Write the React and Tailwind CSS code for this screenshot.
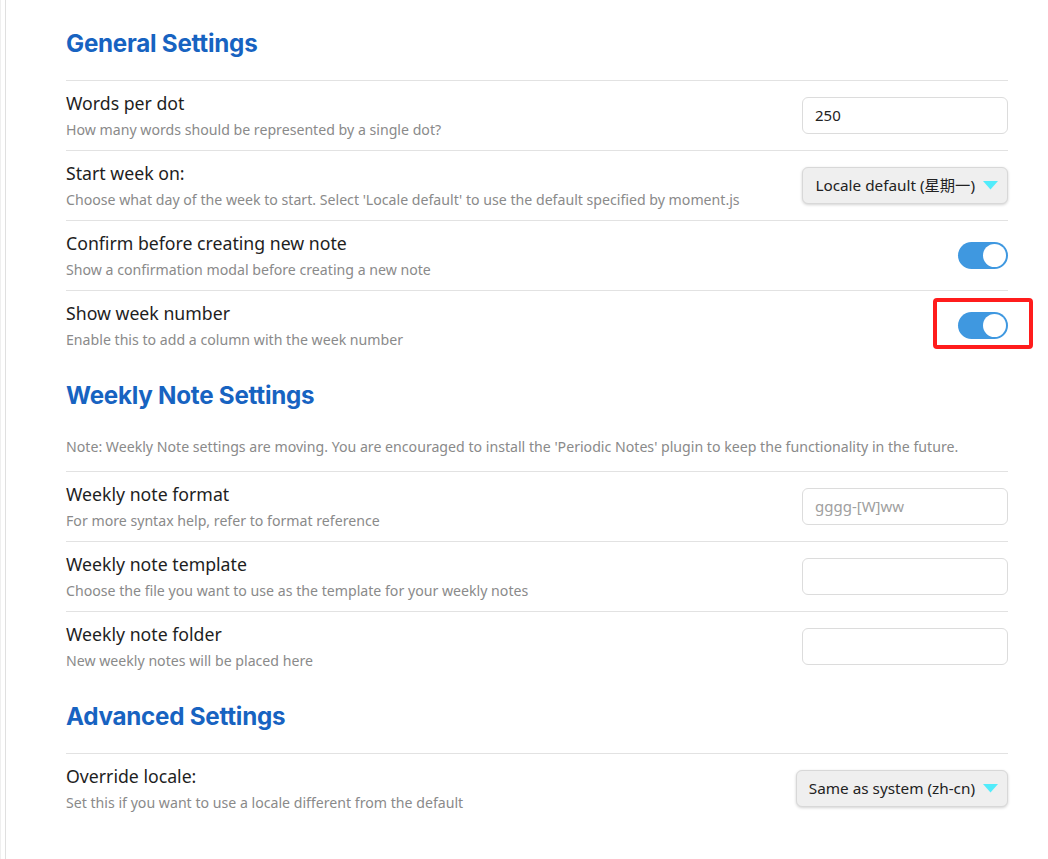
import React from "react";

const body = { fontFamily: '"Noto Sans", "Open Sans", "Noto Sans CJK SC", sans-serif' };

function Heading({ children, first }) {
  return (
    <h2
      className={`${first ? "mt-0" : "mt-[21px]"} mb-[21px] text-[24.2px] leading-[30px] font-bold text-[#1763c1] tracking-[-0.25px]`}
      style={{ fontFamily: 'Inter, "Noto Sans", sans-serif' }}
    >
      {children}
    </h2>
  );
}

function Row({ name, desc, children }) {
  return (
    <div className="flex h-[70px] items-center justify-between border-t border-[#e2e2e2]">
      <div className="flex flex-col">
        <div className="text-[17.7px] leading-[22px] text-[#1e1e1e]">{name}</div>
        <div className="mt-[7px] text-[14.15px] leading-[18px] text-[#8a8a8a]">{desc}</div>
      </div>
      {children}
    </div>
  );
}

function Input({ value, placeholder }) {
  return (
    <div className="flex h-[37px] w-[206px] items-center rounded-[6px] border border-[#dcdcdc] bg-white px-3 text-[15px]">
      {value ? (
        <span className="text-[#222]">{value}</span>
      ) : (
        <span className="text-[#a0a0a0]">{placeholder}</span>
      )}
    </div>
  );
}

function Dropdown({ label }) {
  return (
    <div className="flex h-[37px] items-center gap-[8px] rounded-[6px] border border-[#d8d8d8] bg-[#efefef] pl-3 pr-[9px] text-[15.3px] text-[#222] shadow-[0_1px_3px_rgba(0,0,0,0.18)]">
      <span>{label}</span>
      <svg width="15" height="9" viewBox="0 0 15 9">
        <path d="M0 0 H15 L7.5 8.5 Z" fill="#52ecfb" />
      </svg>
    </div>
  );
}

function Toggle() {
  return (
    <div className="flex h-[27px] w-[50px] items-center justify-end rounded-full bg-[#3f98e0] pr-[2px]">
      <div className="h-[23px] w-[23px] rounded-full bg-white" />
    </div>
  );
}

export default function App() {
  return (
    <div className="min-h-[859px] w-[1048px] border-l border-[#efefef] bg-white" style={body}>
      <div className="ml-[4px] min-h-[859px] border-l border-[#e0e0e0] pl-[60px] pr-[40px] pt-[29px] pb-[36px]">
        <Heading first>General Settings</Heading>
        <Row name="Words per dot" desc="How many words should be represented by a single dot?">
          <Input value="250" />
        </Row>
        <Row
          name="Start week on:"
          desc="Choose what day of the week to start. Select 'Locale default' to use the default specified by moment.js"
        >
          <Dropdown label="Locale default (星期一)" />
        </Row>
        <Row name="Confirm before creating new note" desc="Show a confirmation modal before creating a new note">
          <Toggle />
        </Row>
        <Row name="Show week number" desc="Enable this to add a column with the week number">
          <div className="relative">
            <Toggle />
            <div className="absolute -left-[25px] -top-[14px] h-[51px] w-[100px] rounded-[4px] border-[4px] border-[#ff1c1c]" />
          </div>
        </Row>

        <Heading>Weekly Note Settings</Heading>
        <div className="-mt-[1px] pt-[6px] pb-[14px] text-[14.15px] leading-[20px] text-[#8a8a8a]">
          Note: Weekly Note settings are moving. You are encouraged to install the 'Periodic Notes' plugin to keep the
          functionality in the future.
        </div>
        <Row name="Weekly note format" desc="For more syntax help, refer to format reference">
          <Input placeholder="gggg-[W]ww" />
        </Row>
        <Row name="Weekly note template" desc="Choose the file you want to use as the template for your weekly notes">
          <Input />
        </Row>
        <Row name="Weekly note folder" desc="New weekly notes will be placed here">
          <Input />
        </Row>

        <Heading>Advanced Settings</Heading>
        <Row name="Override locale:" desc="Set this if you want to use a locale different from the default">
          <Dropdown label="Same as system (zh-cn)" />
        </Row>
      </div>
    </div>
  );
}
